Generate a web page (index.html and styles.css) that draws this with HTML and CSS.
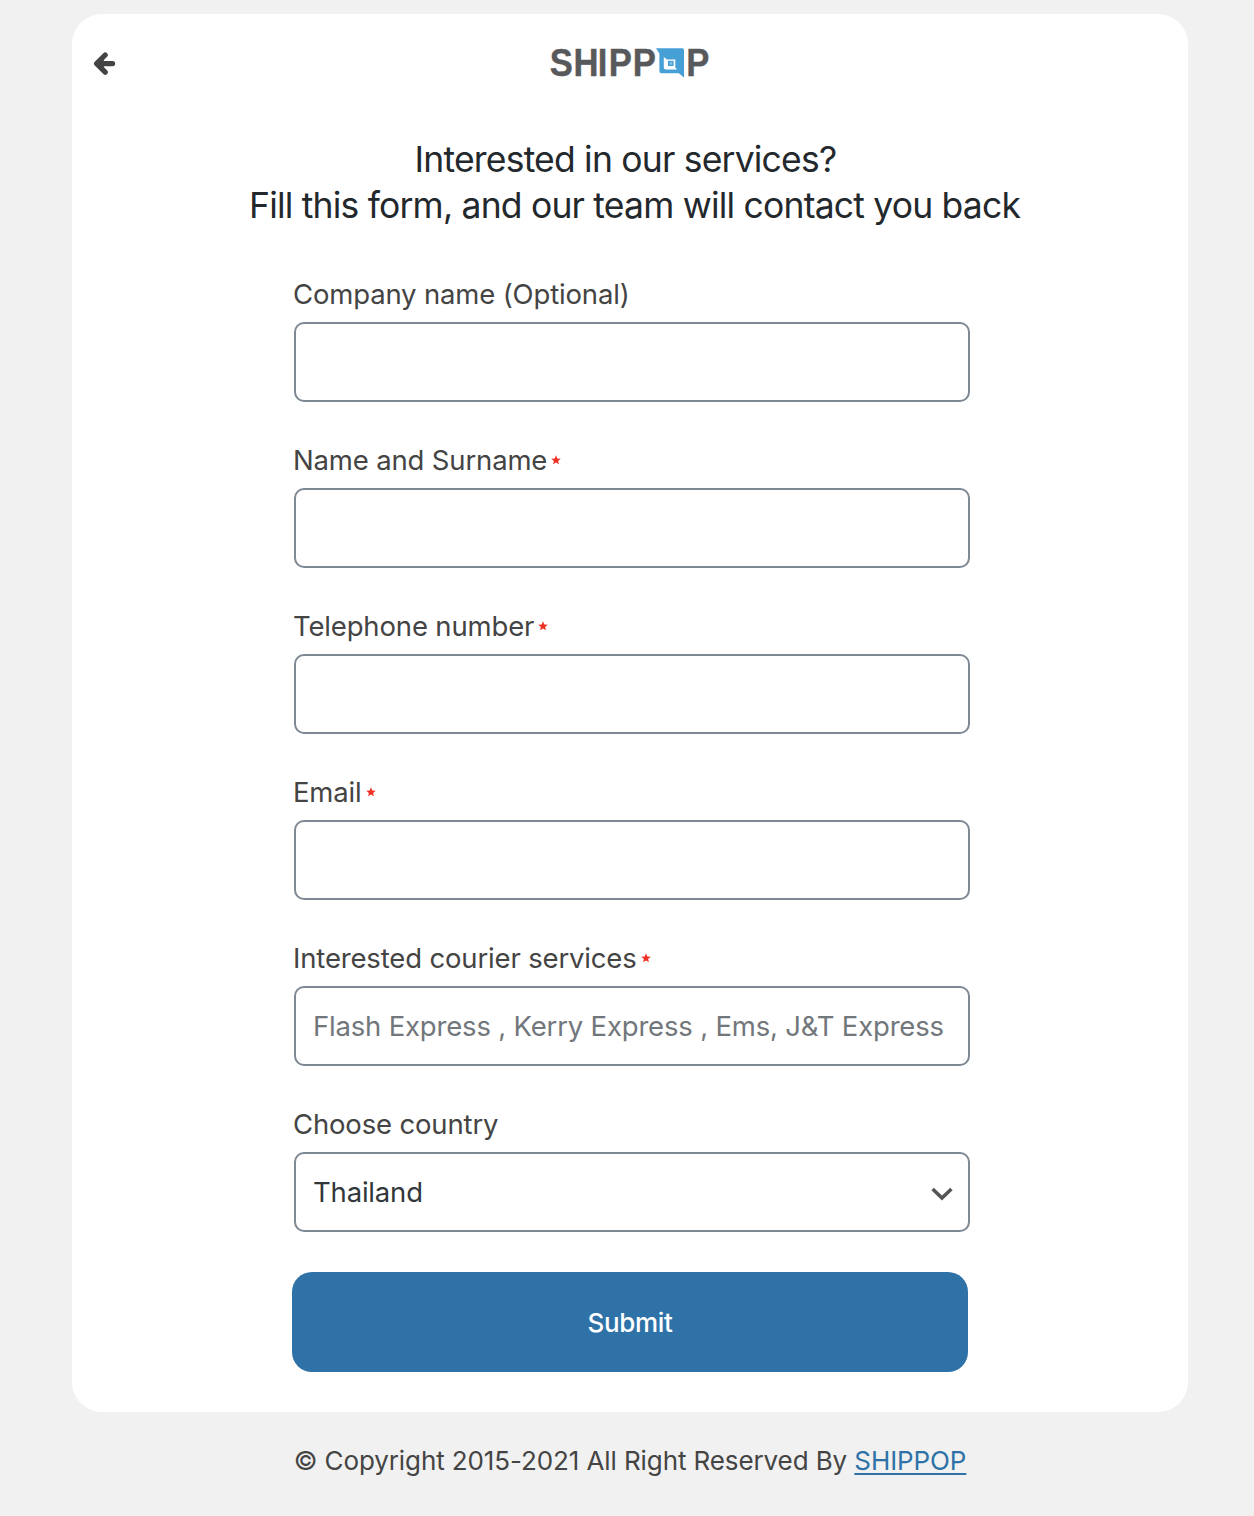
FILE: index.html
```
<!DOCTYPE html>
<html lang="en">
<head>
<meta charset="utf-8">
<title>SHIPPOP</title>
<link rel="stylesheet" href="styles.css">
</head>
<body>
<svg width="0" height="0" class="defs" aria-hidden="true">
  <symbol id="star" viewBox="0 0 10 10"><path d="M5 .3 6.3 3.5 9.7 3.7 7.1 5.9 7.9 9.3 5 7.5 2.1 9.3 2.9 5.9.3 3.7 3.7 3.5Z"/></symbol>
</svg>
<main class="card">
  <header class="top">
    <a class="back" href="#" aria-label="Back">
      <svg width="24" height="24" viewBox="0 0 24 24"><path class="arrow-head" d="M13.2 3 4.6 11.6 13.2 20.2 11 11.6Z"/><path d="M13.2 3 4.6 11.6 13.2 20.2M5 11.6H20.6"/></svg>
    </a>
    <svg class="logo" width="160" height="32" viewBox="0 0 160 32" role="img" aria-label="SHIPPOP">
      <text class="logo-text" transform="scale(.9 1)" y="29.2" x="-.3 26.1 53.1 65.3 92 151.5">SHIPPP</text>
      <path class="logo-blue" d="M106 1.3H132.4Q134 1.3 134 2.9V30.4L128.8 26.2H111.4Q109.4 26.2 109.4 24.2V6.4Z"/>
      <path class="logo-white" d="M113.8 10 117 12.4H125.3V20.4L127 22.4H115.8Q113.8 22.4 113.8 20.4Z"/>
      <path class="logo-blue" d="M118 13.8H123.6V19H118Z"/>
      <path class="logo-light" d="M119.8 15.2H122.2V17.6H119.8Z"/>
    </svg>
  </header>
  <h1 class="title">Interested in our services?&nbsp;<br>&nbsp;Fill this form, and our team will contact you back</h1>
  <form class="form">
    <div class="field">
      <label class="label" for="company">Company name (Optional)</label>
      <input class="input" id="company" type="text">
    </div>
    <div class="field">
      <label class="label" for="name">Name and Surname<svg class="star"><use href="#star"/></svg></label>
      <input class="input" id="name" type="text">
    </div>
    <div class="field">
      <label class="label" for="phone">Telephone number<svg class="star"><use href="#star"/></svg></label>
      <input class="input" id="phone" type="text">
    </div>
    <div class="field">
      <label class="label" for="email">Email<svg class="star"><use href="#star"/></svg></label>
      <input class="input" id="email" type="text">
    </div>
    <div class="field">
      <label class="label" for="courier">Interested courier services<svg class="star"><use href="#star"/></svg></label>
      <input class="input" id="courier" type="text" placeholder="Flash Express , Kerry Express , Ems, J&amp;T Express">
    </div>
    <div class="field">
      <span class="label">Choose country</span>
      <div class="input select" role="combobox" tabindex="0">
        <span>Thailand</span>
        <svg class="chevron" width="24" height="16" viewBox="0 0 24 16"><path d="M2.6 3 12 12 21.4 3"/></svg>
      </div>
    </div>
    <button class="submit" type="button">Submit</button>
  </form>
</main>
<footer class="footer">© Copyright 2015-2021 All Right Reserved By <a href="#">SHIPPOP</a></footer>
</body>
</html>
```
FILE: styles.css
```
* {
  box-sizing: border-box;
}

body {
  margin: 0;
  padding-top: 14px;
  background: #f1f1f1;
  color: #444;
  font-family: Inter, "Liberation Sans", sans-serif;
}

.defs {
  display: block;
}

.card {
  margin: 0 66px 0 72px;
  padding: 33px 0 40px;
  background: #fff;
  border-radius: 30px;
}

.top {
  display: grid;
  grid-template-columns: 1fr 160px 1fr;
  align-items: center;
  height: 32px;
}

.back {
  display: flex;
  padding-left: 20px;
  padding-top: 1px;
}

.back path {
  fill: none;
  stroke: #444;
  stroke-width: 5.2;
  stroke-linecap: round;
  stroke-linejoin: round;
}

.back .arrow-head {
  fill: #444;
  stroke: none;
}

.logo {
  display: block;
  overflow: visible;
}

.logo-text {
  font: bold 38.5px "Liberation Sans", sans-serif;
  fill: #58595b;
  stroke: #58595b;
  stroke-width: 0.4;
}

.logo-blue {
  fill: #469fd5;
}

.logo-white {
  fill: #fff;
}

.logo-light {
  fill: #8fc5e6;
}

.title {
  margin: 58px 0 47px;
  color: #23282d;
  font-size: 35.5px;
  font-weight: 400;
  line-height: 46px;
  letter-spacing: -0.8px;
  text-align: center;
}

.form {
  display: flex;
  flex-direction: column;
  gap: 40px;
  width: 676px;
  margin: 0 auto;
}

.field {
  display: flex;
  flex-direction: column;
  gap: 10px;
}

.label {
  display: flex;
  align-items: center;
  height: 36px;
  padding-left: 1px;
  font-size: 27.5px;
  line-height: 36px;
  letter-spacing: -0.16px;
}

.star {
  width: 10px;
  height: 10px;
  margin: 0 0 0 4px;
  fill: #ee3124;
}

.input {
  width: 676px;
  height: 80px;
  margin-left: 2px;
  padding: 0 14px 0 17px;
  border: 2px solid #7e8993;
  border-radius: 10px;
  background: #fff;
  color: #32373c;
  font: 27.5px Inter, "Liberation Sans", sans-serif;
  letter-spacing: -0.19px;
}

.input::placeholder {
  color: #72777c;
  opacity: 1;
}

.select {
  display: flex;
  align-items: center;
  justify-content: space-between;
}

.chevron {
  margin-top: 4px;
}

.chevron path {
  fill: none;
  stroke: #555;
  stroke-width: 3.6;
}

.submit {
  height: 100px;
  padding: 0;
  border: 0;
  border-radius: 20px;
  background: #2e72a7;
  color: #fff;
  font: 500 26px Inter, "Liberation Sans", sans-serif;
  letter-spacing: -0.35px;
}

.footer {
  margin-top: 31px;
  padding-left: 6px;
  font-size: 26px;
  line-height: 36px;
  letter-spacing: -0.1px;
  text-align: center;
}

.footer a {
  color: #2e72a7;
  text-decoration-thickness: 2px;
  text-underline-offset: 3px;
}
```
